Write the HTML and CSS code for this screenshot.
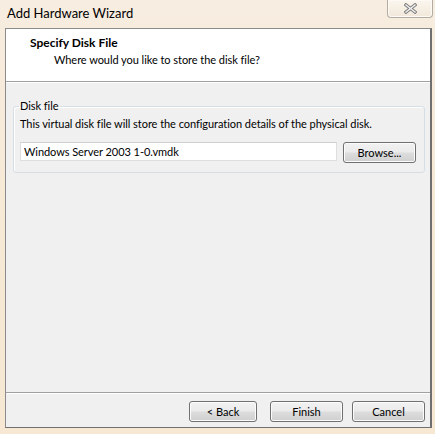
FILE: index.html
```html
<!DOCTYPE html>
<html lang="en">
<head>
    <meta charset="UTF-8">
    <title>Add Hardware Wizard</title>
    <link rel="stylesheet" href="styles.css">
</head>
<body>
    <div class="window">
        <div class="titlebar">
            <span class="title">Add Hardware Wizard</span>
            <div class="close-btn">
                <svg width="13" height="11" viewBox="0 0 13 11">
                    <path d="M2 2 L11 9 M11 2 L2 9" stroke="#7d7d7d" stroke-width="3.4" stroke-linecap="square"/>
                    <path d="M2 2 L11 9 M11 2 L2 9" stroke="#f4f4f4" stroke-width="1.4" stroke-linecap="square"/>
                </svg>
            </div>
        </div>
        <div class="client">
            <div class="header">
                <h2>Specify Disk File</h2>
                <p>Where would you like to store the disk file?</p>
            </div>
            <div class="content">
                <fieldset class="group">
                    <legend>Disk file</legend>
                    <p class="desc">This virtual disk file will store the configuration details of the physical disk.</p>
                    <div class="file-row">
                        <input type="text" class="file-input" value="Windows Server 2003 1-0.vmdk">
                        <button class="btn browse">Browse...</button>
                    </div>
                </fieldset>
            </div>
            <div class="footer">
                <button class="btn back">&lt; Back</button>
                <button class="btn">Finish</button>
                <button class="btn">Cancel</button>
            </div>
        </div>
    </div>
</body>
</html>
```

FILE: styles.css
```css
html, body {
    margin: 0;
    padding: 0;
    height: 100%;
}
body {
    font-family: Lato, "Noto Sans", sans-serif;
    font-size: 11px;
    letter-spacing: -0.05px;
    color: #000;
}
.window {
    width: 435px;
    height: 434px;
    box-sizing: border-box;
    background: linear-gradient(180deg, #f7ede0 0%, #f6e9d5 50%, #f6e8d2 100%);
    padding: 0 3px 6px 5px;
    display: flex;
    flex-direction: column;
}
.titlebar {
    height: 28px;
    display: flex;
    align-items: flex-start;
    justify-content: space-between;
}
.title {
    font-size: 13px;
    letter-spacing: 0;
    margin: 5px 0 0 2px;
}
.close-btn {
    width: 46px;
    height: 18px;
    margin-right: -1px;
    box-sizing: border-box;
    border: 1px solid #b3aca2;
    border-top: none;
    border-radius: 0 0 4px 4px;
    background: linear-gradient(180deg, #fbf6ee, #f1e8da);
    box-shadow: inset 0 0 0 1px #fdfaf5;
    display: flex;
    align-items: center;
    justify-content: center;
}
.client {
    flex: 1;
    background: #f0f0f0;
    border: 1px solid #8b8b8b;
    border-right: 2px solid #6f6f6f;
    border-bottom-color: #6f6f6f;
    display: flex;
    flex-direction: column;
}
.header {
    background: #fff;
    height: 53px;
    box-sizing: border-box;
    border-bottom: 1px solid #a0a0a0;
    padding: 6px 0 0 24px;
}
.header h2 {
    margin: 0 0 2px;
    font-size: 12px;
    font-weight: bold;
    letter-spacing: 0;
    line-height: 15px;
}
.header p {
    margin: 0;
    padding-left: 24px;
    line-height: 15px;
}
.content {
    flex: 1;
    padding: 16px 6px 0 7px;
    border-top: 1px solid #fff;
}
.group {
    margin: 0;
    padding: 0 8px 9px 6px;
    border: 1px solid #d5dfe5;
    border-radius: 3px;
    box-shadow: inset 1px 1px 0 #fff;
}
.group legend {
    padding: 0 1px;
    margin-left: -1px;
    line-height: 14px;
}
.desc {
    margin: 3px 0 11px;
    line-height: 15px;
}
.file-row {
    display: flex;
    align-items: flex-start;
    gap: 6px;
}
.file-input {
    width: 317px;
    height: 19px;
    box-sizing: border-box;
    border: 1px solid #dedede;
    border-top-color: #cfcfcf;
    background: #fff;
    font-family: inherit;
    font-size: 11px;
    letter-spacing: -0.05px;
    padding: 0 3px;
    margin: 0;
    outline: none;
}
.btn {
    width: 73px;
    height: 21px;
    box-sizing: border-box;
    border: 1px solid #707070;
    border-radius: 3px;
    background: linear-gradient(180deg, #f2f2f2 0%, #ebebeb 48%, #dddddd 52%, #cfcfcf 100%);
    box-shadow: inset 0 0 0 1px #fcfcfc;
    font-family: inherit;
    font-size: 11px;
    color: #000;
    padding: 0;
    margin: 0;
    line-height: 17px;
}
.footer {
    height: 35px;
    box-sizing: border-box;
    border-top: 1px solid #a0a0a0;
    box-shadow: inset 0 1px 0 #fff;
    display: flex;
    justify-content: flex-end;
    align-items: flex-start;
    gap: 9px;
    padding: 8px 5px 0 0;
}
.footer .back {
    width: 68px;
    margin-right: 4px;
}
```
